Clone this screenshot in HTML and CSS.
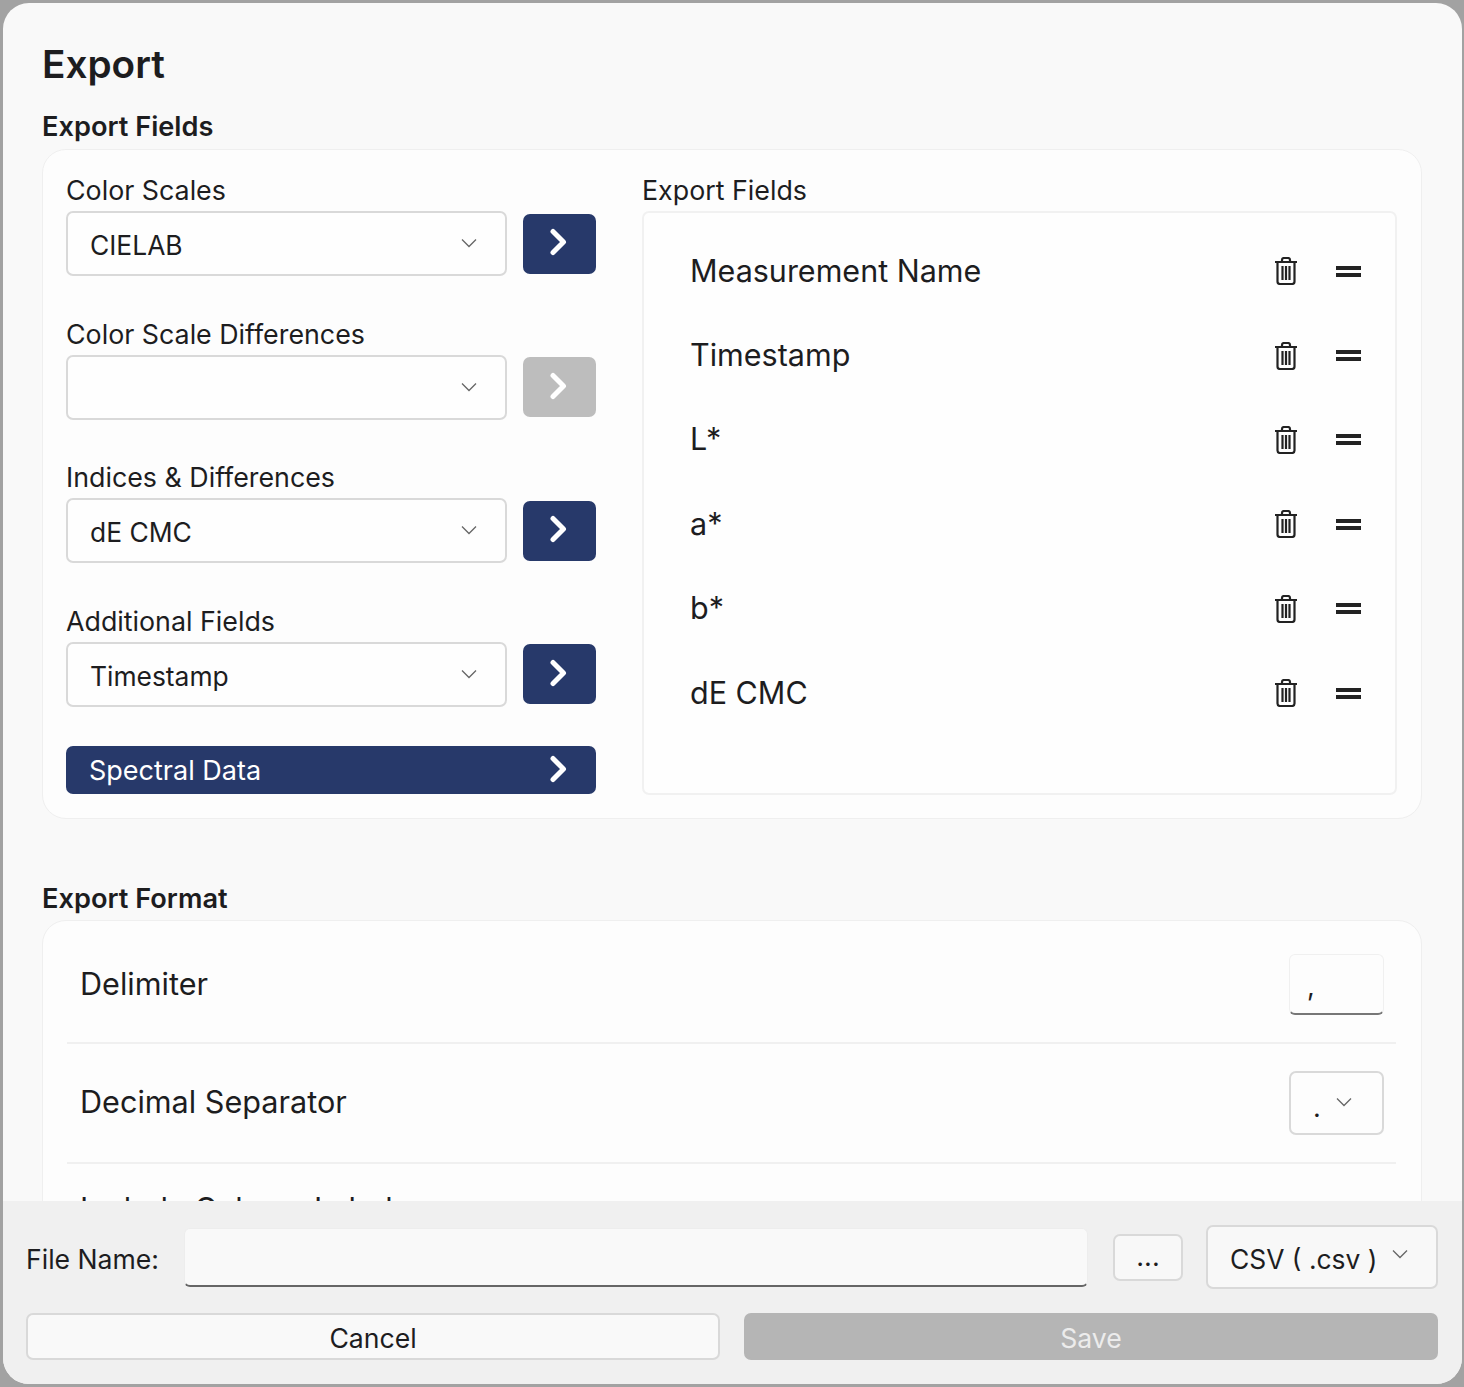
FILE: index.html
```html
<!DOCTYPE html>
<html lang="en">
<head>
    <meta charset="UTF-8">
    <title>Export</title>
    <link rel="stylesheet" href="styles.css">
</head>
<body>
    <svg class="icon-defs" width="0" height="0">
        <symbol id="chevron" viewBox="0 0 20 28">
            <path d="M4 3.5 L14.5 14 L4 24.5" fill="none" stroke="currentColor" stroke-width="5" stroke-linecap="round" stroke-linejoin="round"/>
        </symbol>
        <symbol id="caret" viewBox="0 0 16 10">
            <path d="M1 1.5 L8 8.5 L15 1.5" fill="none" stroke="currentColor" stroke-width="1.3"/>
        </symbol>
        <symbol id="trash" viewBox="0 0 24 28">
            <path d="M1 5 H23 M8 5 V3 Q8 1 10 1 H14 Q16 1 16 3 V5 M3.5 5 V24.5 Q3.5 27 6 27 H18 Q20.5 27 20.5 24.5 V5" fill="none" stroke="currentColor" stroke-width="2.2"/>
            <path d="M8.5 9 V23 M12 9 V23 M15.5 9 V23" fill="none" stroke="currentColor" stroke-width="2.2"/>
        </symbol>
    </svg>

    <div class="window">
        <div class="content">
            <h1>Export</h1>

            <h2>Export Fields</h2>
            <div class="card fields-card">
                <div class="pickers">
                    <div class="picker">
                        <label>Color Scales</label>
                        <div class="picker-row">
                            <div class="select">CIELAB<svg class="caret"><use href="#caret"/></svg></div>
                            <button class="add-btn"><svg class="chevron"><use href="#chevron"/></svg></button>
                        </div>
                    </div>
                    <div class="picker">
                        <label>Color Scale Differences</label>
                        <div class="picker-row">
                            <div class="select"><svg class="caret"><use href="#caret"/></svg></div>
                            <button class="add-btn disabled"><svg class="chevron"><use href="#chevron"/></svg></button>
                        </div>
                    </div>
                    <div class="picker">
                        <label>Indices &amp; Differences</label>
                        <div class="picker-row">
                            <div class="select">dE CMC<svg class="caret"><use href="#caret"/></svg></div>
                            <button class="add-btn"><svg class="chevron"><use href="#chevron"/></svg></button>
                        </div>
                    </div>
                    <div class="picker">
                        <label>Additional Fields</label>
                        <div class="picker-row">
                            <div class="select">Timestamp<svg class="caret"><use href="#caret"/></svg></div>
                            <button class="add-btn"><svg class="chevron"><use href="#chevron"/></svg></button>
                        </div>
                    </div>
                    <button class="spectral-btn">Spectral Data<svg class="chevron"><use href="#chevron"/></svg></button>
                </div>

                <div class="selected">
                    <label>Export Fields</label>
                    <div class="field-list">
                        <div class="field"><span>Measurement Name</span><svg class="trash"><use href="#trash"/></svg><div class="handle"></div></div>
                        <div class="field"><span>Timestamp</span><svg class="trash"><use href="#trash"/></svg><div class="handle"></div></div>
                        <div class="field"><span>L*</span><svg class="trash"><use href="#trash"/></svg><div class="handle"></div></div>
                        <div class="field"><span>a*</span><svg class="trash"><use href="#trash"/></svg><div class="handle"></div></div>
                        <div class="field"><span>b*</span><svg class="trash"><use href="#trash"/></svg><div class="handle"></div></div>
                        <div class="field"><span>dE CMC</span><svg class="trash"><use href="#trash"/></svg><div class="handle"></div></div>
                    </div>
                </div>
            </div>

            <h2 class="format-title">Export Format</h2>
            <div class="card format-card">
                <div class="format-row">
                    <span>Delimiter</span>
                    <div class="small-input">,</div>
                </div>
                <div class="format-row">
                    <span class="decimal-label">Decimal Separator</span>
                    <div class="small-select">.<svg class="caret"><use href="#caret"/></svg></div>
                </div>
                <div class="format-row last">
                    <span>Include Column Labels</span>
                </div>
            </div>
        </div>

        <div class="footer">
            <div class="file-row">
                <label>File Name:</label>
                <div class="file-input"></div>
                <button class="browse-btn">...</button>
                <div class="type-select">CSV ( .csv )<svg class="caret"><use href="#caret"/></svg></div>
            </div>
            <div class="action-row">
                <button class="action-btn">Cancel</button>
                <button class="action-btn save">Save</button>
            </div>
        </div>
    </div>
</body>
</html>
```

FILE: styles.css
```css
* {
    box-sizing: border-box;
}

body {
    margin: 0;
    height: 1387px;
    padding: 3px 2px 3px 3px;
    background: #a2a2a2;
    font-family: Inter, "Noto Sans", sans-serif;
    color: #1d1d1f;
    overflow: hidden;
}

.icon-defs {
    position: absolute;
}

.window {
    height: 100%;
    display: flex;
    flex-direction: column;
    background: #f9f9f9;
    border-radius: 26px;
    overflow: hidden;
}

.content {
    flex: 1;
    min-height: 0;
    overflow: hidden;
    padding: 39px 40px 0 39px;
}

h1 {
    margin: 0 0 25px;
    font-size: 38.7px;
    line-height: 44px;
    font-weight: 600;
}

h2 {
    margin: 0 0 6px;
    font-size: 27.2px;
    line-height: 32px;
    font-weight: 600;
}

.format-title {
    margin: 64px 0 5px;
}

.card {
    background: #fdfdfd;
    border: 1px solid #efefef;
    border-radius: 24px;
}

.fields-card {
    display: flex;
    height: 670px;
    padding: 25px 24px 23px 23px;
}

label {
    display: block;
    padding-bottom: 2px;
    font-size: 26.8px;
    line-height: 30px;
}

.pickers {
    width: 530px;
    margin-right: 46px;
}

.picker {
    height: 143.5px;
}

.picker-row {
    display: flex;
    align-items: center;
    gap: 16px;
    margin-top: 4px;
}

.select {
    flex: 1;
    height: 65px;
    display: flex;
    align-items: center;
    justify-content: space-between;
    padding: 3px 28px 0 22px;
    background: #fefefe;
    border: 2px solid #d9d9d9;
    border-radius: 7px;
    font-size: 26.4px;
}

.caret {
    width: 16px;
    height: 10px;
    flex: none;
    margin-left: auto;
    color: #666;
}

.select .caret {
    margin-top: -4px;
}

button {
    font-family: inherit;
    border: none;
}

.add-btn {
    width: 73px;
    height: 60px;
    display: flex;
    align-items: center;
    justify-content: center;
    padding: 0 2px 3px 0;
    background: #27396a;
    color: #fff;
    border-radius: 7px;
}

.add-btn.disabled {
    background: #bdbdbd;
}

.chevron {
    width: 20px;
    height: 28px;
}

.spectral-btn {
    width: 100%;
    height: 48px;
    display: flex;
    align-items: center;
    justify-content: space-between;
    margin-top: -3px;
    padding: 0 27px 0 23px;
    background: #27396a;
    color: #fff;
    border-radius: 7px;
    font-size: 27px;
}

.spectral-btn .chevron {
    margin: -3px 0 0 0;
}

.selected {
    flex: 1;
    display: flex;
    flex-direction: column;
}

.selected label {
    margin-bottom: 4px;
}

.field-list {
    flex: 1;
    padding-top: 16px;
    background: #fefefe;
    border: 2px solid #f1f1f1;
    border-radius: 7px;
}

.field {
    height: 84.4px;
    display: flex;
    align-items: center;
    padding: 0 34px 0 46px;
    font-size: 30.5px;
}

.field span {
    flex: 1;
    margin-top: -2px;
}

.trash {
    width: 24px;
    height: 28px;
    margin-right: 38px;
    color: #222;
}

.handle {
    width: 25px;
    height: 11px;
    border-top: 4px solid #222;
    border-bottom: 4px solid #222;
}

.format-card {
    height: 400px;
    padding: 3px 25px 0 24px;
}

.format-row {
    height: 120px;
    display: flex;
    align-items: center;
    justify-content: space-between;
    padding: 0 12px 0 13px;
    border-bottom: 2px solid #f0f0f0;
    font-size: 30.6px;
}

.format-row.last {
    padding-bottom: 32px;
    border-bottom: none;
}

.decimal-label {
    margin-top: -3px;
}

.small-input {
    width: 95px;
    height: 61px;
    display: flex;
    align-items: center;
    margin-top: 2px;
    padding: 6px 0 0 17px;
    background: #fdfdfd;
    border: 1px solid #f0f0f0;
    border-bottom: 2px solid #777;
    border-radius: 6px;
    font-size: 27px;
}

.small-select {
    width: 95px;
    height: 64px;
    display: flex;
    align-items: center;
    padding: 8px 12px 0 22px;
    border: 2px solid #d9d9d9;
    border-radius: 7px;
    font-size: 27px;
}

.small-select .caret {
    margin: -10px 0 0 15px;
}

.footer {
    flex: none;
    height: 183px;
    padding: 24px 24px 0 23px;
    background: #f0f0f0;
}

.file-row {
    height: 64px;
    display: flex;
    align-items: center;
}

.file-row label {
    width: 158px;
    flex: none;
    margin-top: 6px;
    font-size: 26.6px;
}

.file-input {
    width: 904px;
    height: 59px;
    margin-right: 25px;
    background: #f9f9f9;
    border: 1px solid #ededed;
    border-bottom: 2px solid #666;
    border-radius: 6px;
}

.browse-btn {
    width: 70px;
    height: 47px;
    margin-right: 23px;
    padding: 0 0 2px;
    background: #f8f8f8;
    border: 2px solid #d9d9d9;
    border-radius: 7px;
    font-size: 27px;
    color: #1d1d1f;
}

.type-select {
    width: 232px;
    height: 64px;
    display: flex;
    align-items: center;
    padding: 4px 28px 0 22px;
    background: #f8f8f8;
    border: 2px solid #d9d9d9;
    border-radius: 7px;
    font-size: 26.4px;
}

.type-select .caret {
    margin-top: -10px;
}

.action-row {
    display: flex;
    gap: 24px;
    margin-top: 24px;
}

.action-btn {
    flex: 1;
    height: 47px;
    padding: 3px 0 0;
    background: #f9f9f9;
    border: 2px solid #d9d9d9;
    border-radius: 7px;
    font-size: 26.6px;
    color: #1d1d1f;
}

.action-btn.save {
    background: #b5b5b5;
    border-color: #b5b5b5;
    color: #ececec;
}
```
